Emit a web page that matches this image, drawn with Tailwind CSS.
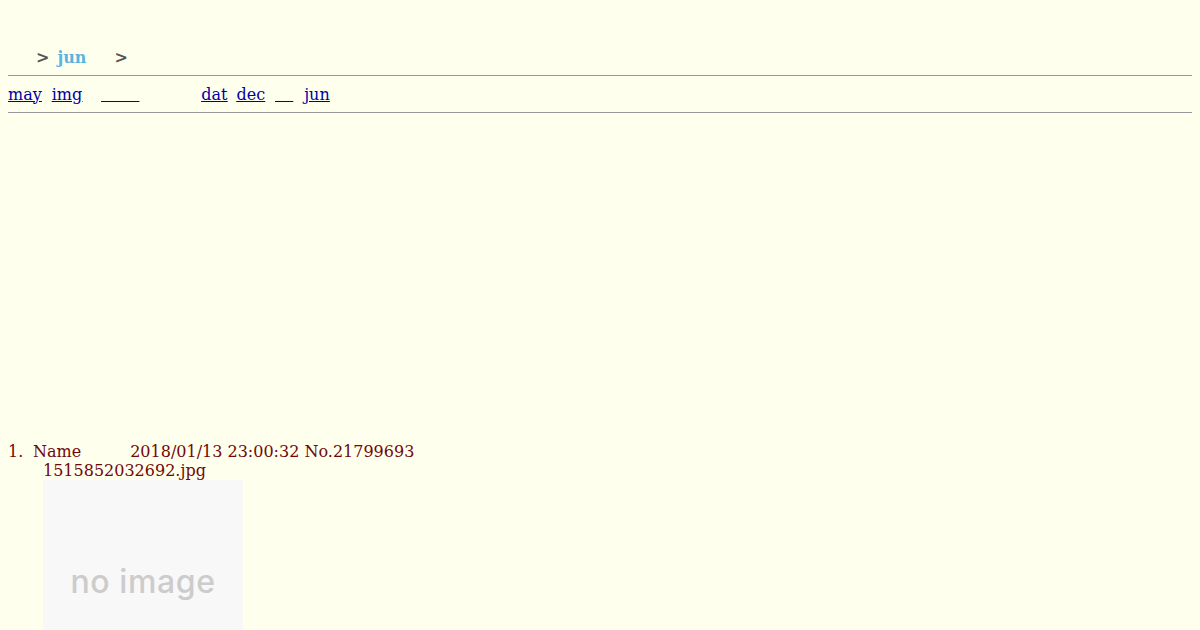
<!DOCTYPE html>
<html>
<head>
<meta charset="utf-8">
<script src="https://cdn.jsdelivr.net/npm/@tailwindcss/browser@4"></script>
</head>
<body class="bg-[#ffffee] text-[#700808] p-2 text-[16px] leading-[19px] font-['DejaVu_Serif',serif] h-[630px] overflow-hidden">
  <header class="flex items-center pt-[32px] pl-[28px] h-[67px] font-bold">
    <span class="text-[#555555]">&gt;</span>
    <span class="ml-[8px] text-[#5bb4e0]">jun</span>
    <span class="ml-[28px] text-[#555555]">&gt;</span>
  </header>
  <hr class="border-0 border-t border-[#999999]">
  <nav class="flex items-center h-[36px] text-[#0000a8] underline">
    <a href="#">may</a>
    <a href="#" class="ml-[10px]">img</a>
    <a href="#" class="ml-[19px] whitespace-pre tracking-[0.34px]">&#160;&#160;&#160;&#160;&#160;&#160;&#160;</a>
    <a href="#" class="ml-[62px]">dat</a>
    <a href="#" class="ml-[9px]">dec</a>
    <a href="#" class="ml-[10px] whitespace-pre tracking-[-0.59px]">&#160;&#160;&#160;&#160;</a>
    <a href="#" class="ml-[11px]">jun</a>
  </nav>
  <hr class="border-0 border-t border-[#999999]">
  <ol class="mt-[329px]">
    <li class="flex">
      <span class="w-[25px] shrink-0">1.</span>
      <div>
        <div class="flex">
          <span>Name</span>
          <span class="ml-[49px]">2018/01/13 23:00:32 No.21799693</span>
        </div>
        <div class="ml-[10px]">1515852032692.jpg</div>
        <div class="ml-[10px] w-[200px] h-[200px] mt-[-0.5px] pt-[4px] bg-[#f8f8f8] flex items-center justify-center">
          <span class="font-['Inter',sans-serif] font-medium text-[32px] leading-none tracking-[0.6px] text-[#cccccc]">no image</span>
        </div>
      </div>
    </li>
  </ol>
</body>
</html>
